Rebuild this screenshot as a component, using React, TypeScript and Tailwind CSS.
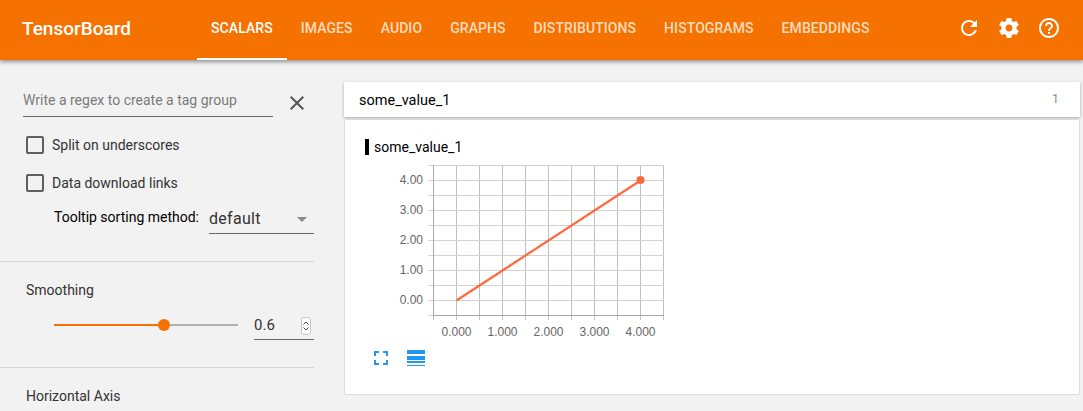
const tabs = ['SCALARS', 'IMAGES', 'AUDIO', 'GRAPHS', 'DISTRIBUTIONS', 'HISTOGRAMS', 'EMBEDDINGS']

const xTicks = [433.5, 456.5, 479.5, 502.5, 525.5, 548.5, 571.5, 594.5, 617.5, 640.5, 663.5]
const yTicks = [165.5, 180.5, 195.5, 210.5, 225.5, 240.5, 255.5, 270.5, 285.5, 300.5, 315.5]

function MaterialIcon({ d, className }: { d: string; className?: string }) {
  return (
    <svg viewBox="0 0 24 24" className={className} fill="currentColor">
      <path d={d} />
    </svg>
  )
}

function Chart() {
  // viewBox uses page coordinates so the ticks read straight off the screenshot
  return (
    <svg width="320" height="185" viewBox="365 160 320 185" className="block">
      {xTicks.map((x) => (
        <line key={x} x1={x} x2={x} y1={165} y2={320} stroke="#c0c0c0" />
      ))}
      {yTicks.map((y) => (
        <line key={y} x1={428} x2={664} y1={y} y2={y} stroke="#d2d2d2" />
      ))}
      <line x1={433.5} x2={433.5} y1={165} y2={316} stroke="#a8a8a8" />
      <line x1={433} x2={664} y1={315.5} y2={315.5} stroke="#a8a8a8" />
      {['4.00', '3.00', '2.00', '1.00', '0.00'].map((t, i) => (
        <text key={t} x={423} y={184 + i * 30} textAnchor="end" fontSize="12" fill="#666" fontFamily="'Liberation Sans', sans-serif">
          {t}
        </text>
      ))}
      {['0.000', '1.000', '2.000', '3.000', '4.000'].map((t, i) => (
        <text key={t} x={456.5 + i * 46} y={336} textAnchor="middle" fontSize="12" fill="#666" fontFamily="'Liberation Sans', sans-serif">
          {t}
        </text>
      ))}
      <line x1={456.5} y1={300.5} x2={640.5} y2={180.5} stroke="#ff6a3c" strokeWidth="2.2" />
      <circle cx={640.5} cy={180} r={4} fill="#ff6a3c" />
    </svg>
  )
}

function CheckRow({ label }: { label: string }) {
  return (
    <div className="flex items-center gap-[8px] pl-[26px] h-[18px]">
      <span className="w-[18px] h-[18px] border-2 border-[#5f5f5f] rounded-[2px] shrink-0" />
      <span className="text-[14px] text-[#333]">{label}</span>
    </div>
  )
}

export default function App() {
  return (
    <div className="w-[1083px] h-[411px] overflow-hidden bg-[#f2f2f2] font-['Roboto',sans-serif] flex flex-col">
      {/* Header */}
      <header className="relative z-10 h-[60px] shrink-0 bg-[#f57200] shadow-[0_2px_4px_rgba(0,0,0,0.4)] flex items-center text-white">
        <div className="pl-[22px] w-[197px] text-[19px] font-medium leading-none shrink-0 pb-[4px]">TensorBoard</div>
        <nav className="flex h-full">
          {tabs.map((t, i) => (
            <div
              key={t}
              className={
                i === 0
                  ? 'px-[14px] h-full flex items-center text-[14px] font-medium tracking-[0.08px] text-white border-b-2 border-white pt-[4px] pb-[6px]'
                  : 'px-[14px] h-full flex items-center text-[14px] font-medium tracking-[0.08px] text-white/75 border-b-2 border-transparent pt-[4px] pb-[6px]'
              }
            >
              {t}
            </div>
          ))}
        </nav>
        <div className="ml-auto flex items-center gap-[16px] pr-[22px] pb-[4px]">
          <MaterialIcon
            className="w-[24px] h-[24px]"
            d="M17.65 6.35C16.2 4.9 14.21 4 12 4c-4.42 0-7.99 3.58-7.99 8s3.57 8 7.99 8c3.73 0 6.84-2.55 7.73-6h-2.08c-.82 2.33-3.04 4-5.65 4-3.31 0-6-2.69-6-6s2.69-6 6-6c1.66 0 3.14.69 4.22 1.78L13 11h7V4l-2.35 2.35z"
          />
          <MaterialIcon
            className="w-[24px] h-[24px]"
            d="M19.43 12.98c.04-.32.07-.64.07-.98s-.03-.66-.07-.98l2.11-1.65c.19-.15.24-.42.12-.64l-2-3.46c-.12-.22-.39-.3-.61-.22l-2.49 1c-.52-.4-1.08-.73-1.69-.98l-.38-2.65C14.46 2.18 14.25 2 14 2h-4c-.25 0-.46.18-.49.42l-.38 2.65c-.61.25-1.17.59-1.69.98l-2.49-1c-.23-.09-.49 0-.61.22l-2 3.46c-.13.22-.07.49.12.64l2.11 1.65c-.04.32-.07.65-.07.98s.03.66.07.98l-2.11 1.65c-.19.15-.24.42-.12.64l2 3.46c.12.22.39.3.61.22l2.49-1c.52.4 1.08.73 1.69.98l.38 2.65c.03.24.24.42.49.42h4c.25 0 .46-.18.49-.42l.38-2.65c.61-.25 1.17-.59 1.69-.98l2.49 1c.23.09.49 0 .61-.22l2-3.46c.12-.22.07-.49-.12-.64l-2.11-1.65zM12 15.5c-1.93 0-3.5-1.57-3.5-3.5s1.57-3.5 3.5-3.5 3.5 1.57 3.5 3.5-1.57 3.5-3.5 3.5z"
          />
          <MaterialIcon
            className="w-[24px] h-[24px]"
            d="M11 18h2v-2h-2v2zm1-16C6.48 2 2 6.48 2 12s4.48 10 10 10 10-4.48 10-10S17.52 2 12 2zm0 18c-4.41 0-8-3.59-8-8s3.59-8 8-8 8 3.59 8 8-3.59 8-8 8zm0-14c-2.21 0-4 1.79-4 4h2c0-1.1.9-2 2-2s2 .9 2 2c0 2-3 1.75-3 5h2c0-2.25 3-2.5 3-5 0-2.21-1.79-4-4-4z"
          />
        </div>
      </header>

      <div className="flex flex-1 min-h-0">
        {/* Sidebar */}
        <aside className="w-[344px] shrink-0 pr-[30px] flex flex-col">
          <div className="flex items-start pl-[23px] pt-[30px]">
            <div className="w-[250px] h-[27px] border-b border-[#666] text-[14px] leading-[21px] text-[#7a7a7a]">
              Write a regex to create a tag group
            </div>
            <MaterialIcon className="w-[24px] h-[24px] ml-[12px] mt-[1px] text-[#555]" d="M19 6.41L17.59 5 12 10.59 6.41 5 5 6.41 10.59 12 5 17.59 6.41 19 12 13.41 17.59 19 19 17.59 13.41 12z" />
          </div>
          <div className="mt-[19px] flex flex-col gap-[20px]">
            <CheckRow label="Split on underscores" />
            <CheckRow label="Data download links" />
          </div>
          <div className="mt-[8px] ml-[54px] flex items-end h-[34px] shrink-0">
            <span className="text-[14px] text-black w-[155px] pb-[6px] whitespace-nowrap">Tooltip sorting method:</span>
            <div className="relative flex-1 h-full border-b border-[#666] text-[16px] text-[#333] leading-[38px] tracking-[0.3px]">
              default
              <span className="absolute right-[7px] top-[17px] w-0 h-0 border-x-[5px] border-x-transparent border-t-[5px] border-t-[#8a8a8a]" />
            </div>
          </div>
          <div className="mt-[27px] h-px bg-[#d6d6d6] shrink-0" />
          <div className="pl-[26px] pt-[20px] text-[14px] leading-[17px] text-[#333]">Smoothing</div>
          <div className="flex items-center mt-[9px] pl-[54px] h-[42px] shrink-0">
            <div className="relative w-[184px] h-[2px] bg-[#b0b0b0] mt-[-1px] mb-[8px]">
              <div className="h-full w-[110px] bg-[#f57200]" />
              <span className="absolute left-[104px] top-[-5px] w-[12px] h-[12px] rounded-full bg-[#f57200]" />
            </div>
            <div className="relative ml-[16px] w-[60px] h-[29px] border-b border-[#666] text-[15px] text-[#333] leading-[29px] mt-[7px] mb-[-1px] translate-y-[-8px]">
              0.6
              <span className="absolute right-[3px] top-[6px] w-[10px] h-[18px] rounded-[3px] border border-[#c8c8c8] bg-white flex flex-col items-center justify-center gap-[2px] text-[#444]">
                <svg width="6" height="4" viewBox="0 0 6 4" fill="none" stroke="currentColor"><path d="M.5 3.5 3 1l2.5 2.5" /></svg>
                <svg width="6" height="4" viewBox="0 0 6 4" fill="none" stroke="currentColor"><path d="M.5.5 3 3 5.500.5" /></svg>
              </span>
            </div>
          </div>
          <div className="mt-[17px] h-px bg-[#d6d6d6] shrink-0" />
          <div className="pl-[26px] pt-[20px] text-[14px] leading-[17px] text-[#333]">Horizontal Axis</div>
        </aside>

        {/* Main */}
        <main className="flex-1 pr-[3px] pt-[22px] flex flex-col">
          <div className="h-[35px] bg-white shadow-[0_1px_3px_rgba(0,0,0,0.3)] flex items-center justify-between pl-[15px] pr-[21px]">
            <span className="text-[14.5px] text-black pt-[3px]">some_value_1</span>
            <span className="text-[13px] text-[#8a8f96] mb-[2px]">1</span>
          </div>
          <div className="mt-[2px] h-[276px] bg-white border border-[#dcdcdc] rounded-[2px] pl-[20px] pt-[19px]">
            <div className="flex items-center gap-[5px] h-[16px]">
              <span className="w-[4px] h-[16px] bg-black" />
              <span className="text-[14px] text-black pt-[1px]">some_value_1</span>
            </div>
            <div className="mt-[5px]">
              <Chart />
            </div>
            <div className="flex items-center gap-[14px] ml-[4px] mt-[1px] text-[#2196f3]">
              <MaterialIcon className="w-[24px] h-[24px]" d="M7 14H5v5h5v-2H7v-3zm-2-4h2V7h3V5H5v5zm12 7h-3v2h5v-5h-2v3zM14 5v2h3v3h2V5h-5z" />
              <div className="flex flex-col w-[18px]">
                <span className="h-[4px] bg-[#2196f3]" />
                <span className="h-[4px] mt-[2px] bg-[#2196f3]" />
                <span className="h-[2px] mt-[1px] bg-[#2196f3]" />
                <span className="h-px mt-[2px] bg-[#2196f3]" />
              </div>
            </div>
          </div>
        </main>
      </div>
    </div>
  )
}
